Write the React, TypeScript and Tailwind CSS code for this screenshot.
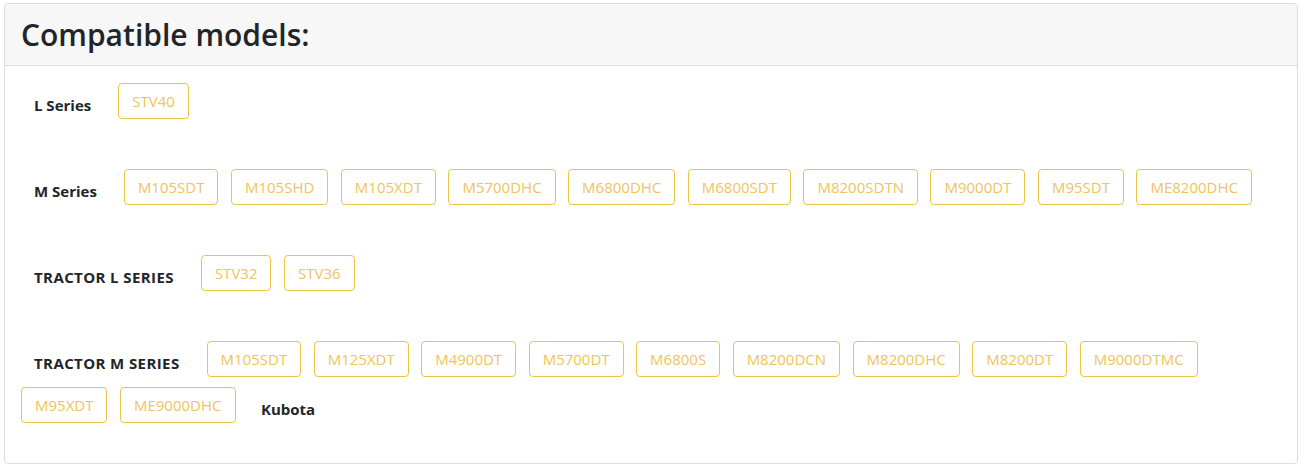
const series = [
  { name: 'L Series', models: ['STV40'] },
  {
    name: 'M Series',
    models: ['M105SDT', 'M105SHD', 'M105XDT', 'M5700DHC', 'M6800DHC', 'M6800SDT', 'M8200SDTN', 'M9000DT', 'M95SDT', 'ME8200DHC']
  },
  { name: 'TRACTOR L SERIES', models: ['STV32', 'STV36'] },
  {
    name: 'TRACTOR M SERIES',
    models: ['M105SDT', 'M125XDT', 'M4900DT', 'M5700DT', 'M6800S', 'M8200DCN', 'M8200DHC', 'M8200DT', 'M9000DTMC', 'M95XDT', 'ME9000DHC'],
    brand: 'Kubota'
  }
]

function Label({ text }: { text: string }) {
  const caps = text === text.toUpperCase()
  return (
    <span
      className={
        'h-[36px] mb-[10px] mr-[14px] px-[13px] pt-[8px] flex items-center text-[15px] font-bold text-[#212529] whitespace-nowrap ' +
        (caps ? 'tracking-[0.4px]' : '')
      }
    >
      {text}
    </span>
  )
}

export default function App() {
  return (
    <div className="pl-[4px] pr-[7px] pt-[3px] font-['Open_Sans',sans-serif]">
      <div className="border border-[#dcdcdc] rounded-[4px] bg-white">
        {/* Header */}
        <div className="bg-[#f7f7f7] border-b border-[#dcdcdc] px-[16px] pt-[13px] pb-[12px] rounded-t-[4px]">
          <h2 className="text-[30px] leading-[36px] font-semibold text-[#212529]">Compatible models:</h2>
        </div>

        {/* Body */}
        <div className="flex flex-col gap-[40px] px-[16px] pt-[17px] pb-[30px]">
          {series.map((s) => (
            <div key={s.name} className="flex flex-wrap">
              <Label text={s.name} />
              {s.models.map((m) => (
                <span
                  key={m}
                  className="h-[36px] mb-[10px] mr-[12.5px] px-[13px] flex items-center border border-[#ebc547] rounded-[4px] text-[15px] text-[#eec45c] whitespace-nowrap"
                >
                  {m}
                </span>
              ))}
              {s.brand && <Label text={s.brand} />}
            </div>
          ))}
        </div>
      </div>
    </div>
  )
}
